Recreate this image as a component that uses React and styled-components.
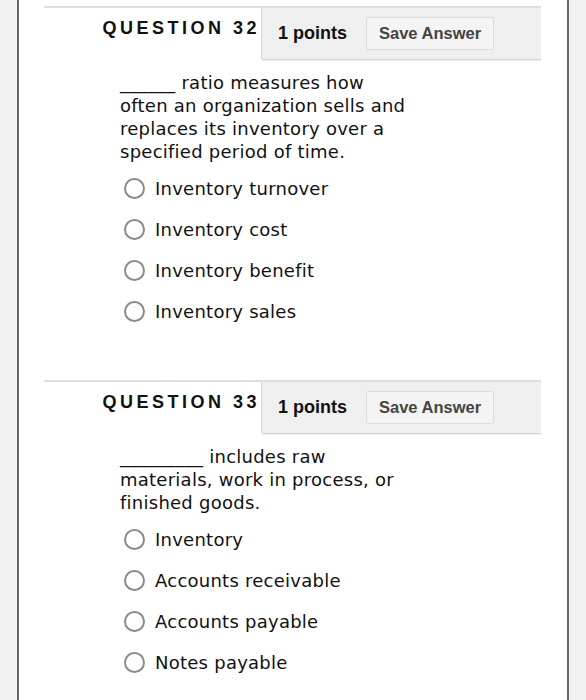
import React from 'react'
import styled, { createGlobalStyle } from 'styled-components'

const questions = [
  {
    number: 32,
    points: 1,
    text: '______ ratio measures how often an organization sells and replaces its inventory over a specified period of time.',
    options: ['Inventory turnover', 'Inventory cost', 'Inventory benefit', 'Inventory sales'],
  },
  {
    number: 33,
    points: 1,
    text: '_________ includes raw materials, work in process, or finished goods.',
    options: ['Inventory', 'Accounts receivable', 'Accounts payable', 'Notes payable'],
  },
]

function Question({ number, points, text, options }) {
  return (
    <QuestionSection>
      <HeaderRow>
        <QuestionTitle>QUESTION {number}</QuestionTitle>
        <PointsBox>
          <Points>{points} points</Points>
          <SaveButton type='button'>Save Answer</SaveButton>
        </PointsBox>
      </HeaderRow>
      <QuestionBody>
        <QuestionText>{text}</QuestionText>
        <OptionList>
          {options.map((opt) => (
            <OptionRow key={opt}>
              <Radio />
              <OptionLabel>{opt}</OptionLabel>
            </OptionRow>
          ))}
        </OptionList>
      </QuestionBody>
    </QuestionSection>
  )
}

export default function App() {
  return (
    <>
      <GlobalStyle />
      <Panel>
        {questions.map((q) => (
          <Question key={q.number} {...q} />
        ))}
      </Panel>
    </>
  )
}

const GlobalStyle = createGlobalStyle`
  html, body {
    margin: 0;
    padding: 0;
    background-color: #f1f1f1;
  }
`

const Panel = styled.div`
  margin: 0 17px;
  min-height: 100vh;
  box-sizing: border-box;
  background-color: #fff;
  border-left: 2px solid #6a6a6a;
  border-right: 2px solid #6a6a6a;
  padding: 6px 26px 0 25px;
`

const QuestionSection = styled.section`
  border-top: 2px solid #dedede;
  padding-bottom: 48px;
`

const HeaderRow = styled.div`
  display: flex;
  height: 52px;
`

const QuestionTitle = styled.div`
  width: 216px;
  padding: 9px 1px 0 0;
  text-align: right;
  font-family: 'Liberation Sans', Arial, sans-serif;
  font-weight: bold;
  font-size: 18px;
  line-height: 22px;
  letter-spacing: 3.5px;
  color: #111;
`

const PointsBox = styled.div`
  flex: 1;
  display: flex;
  align-items: center;
  gap: 19px;
  padding-left: 16px;
  background-color: #efefef;
  border-left: 1px solid #d6d6d6;
  border-bottom: 1px solid #d4d4d4;
  border-bottom-left-radius: 3px;
  box-shadow: 0 1px 1px rgb(0 0 0 / 6%);
`

const Points = styled.span`
  font-family: 'Liberation Sans', Arial, sans-serif;
  font-weight: bold;
  font-size: 18px;
  color: #111;
`

const SaveButton = styled.button`
  height: 33px;
  padding: 0 12px;
  font-family: 'Liberation Sans', Arial, sans-serif;
  font-weight: bold;
  font-size: 16.5px;
  color: #444;
  background-color: #f4f4f4;
  border: 1px solid #dcdcdc;
  border-radius: 2px;
  cursor: pointer;
`

const QuestionBody = styled.div`
  padding-left: 76px;
  margin-top: 11px;
`

const QuestionText = styled.p`
  margin: 0;
  max-width: 290px;
  font-family: 'DejaVu Sans', Verdana, sans-serif;
  font-size: 18px;
  letter-spacing: 0.25px;
  line-height: 23px;
  color: #111;
`

const OptionList = styled.div`
  display: flex;
  flex-direction: column;
  margin-top: 5px;
`

const OptionRow = styled.label`
  display: flex;
  align-items: center;
  height: 41px;
  margin-left: 4px;
`

const Radio = styled.span`
  width: 17px;
  height: 17px;
  border: 2px solid #8a8a8a;
  border-radius: 50%;
  background-color: #fff;
  flex-shrink: 0;
`

const OptionLabel = styled.span`
  margin-left: 10px;
  font-family: 'DejaVu Sans', Verdana, sans-serif;
  font-size: 18px;
  letter-spacing: 0.25px;
  color: #111;
`
